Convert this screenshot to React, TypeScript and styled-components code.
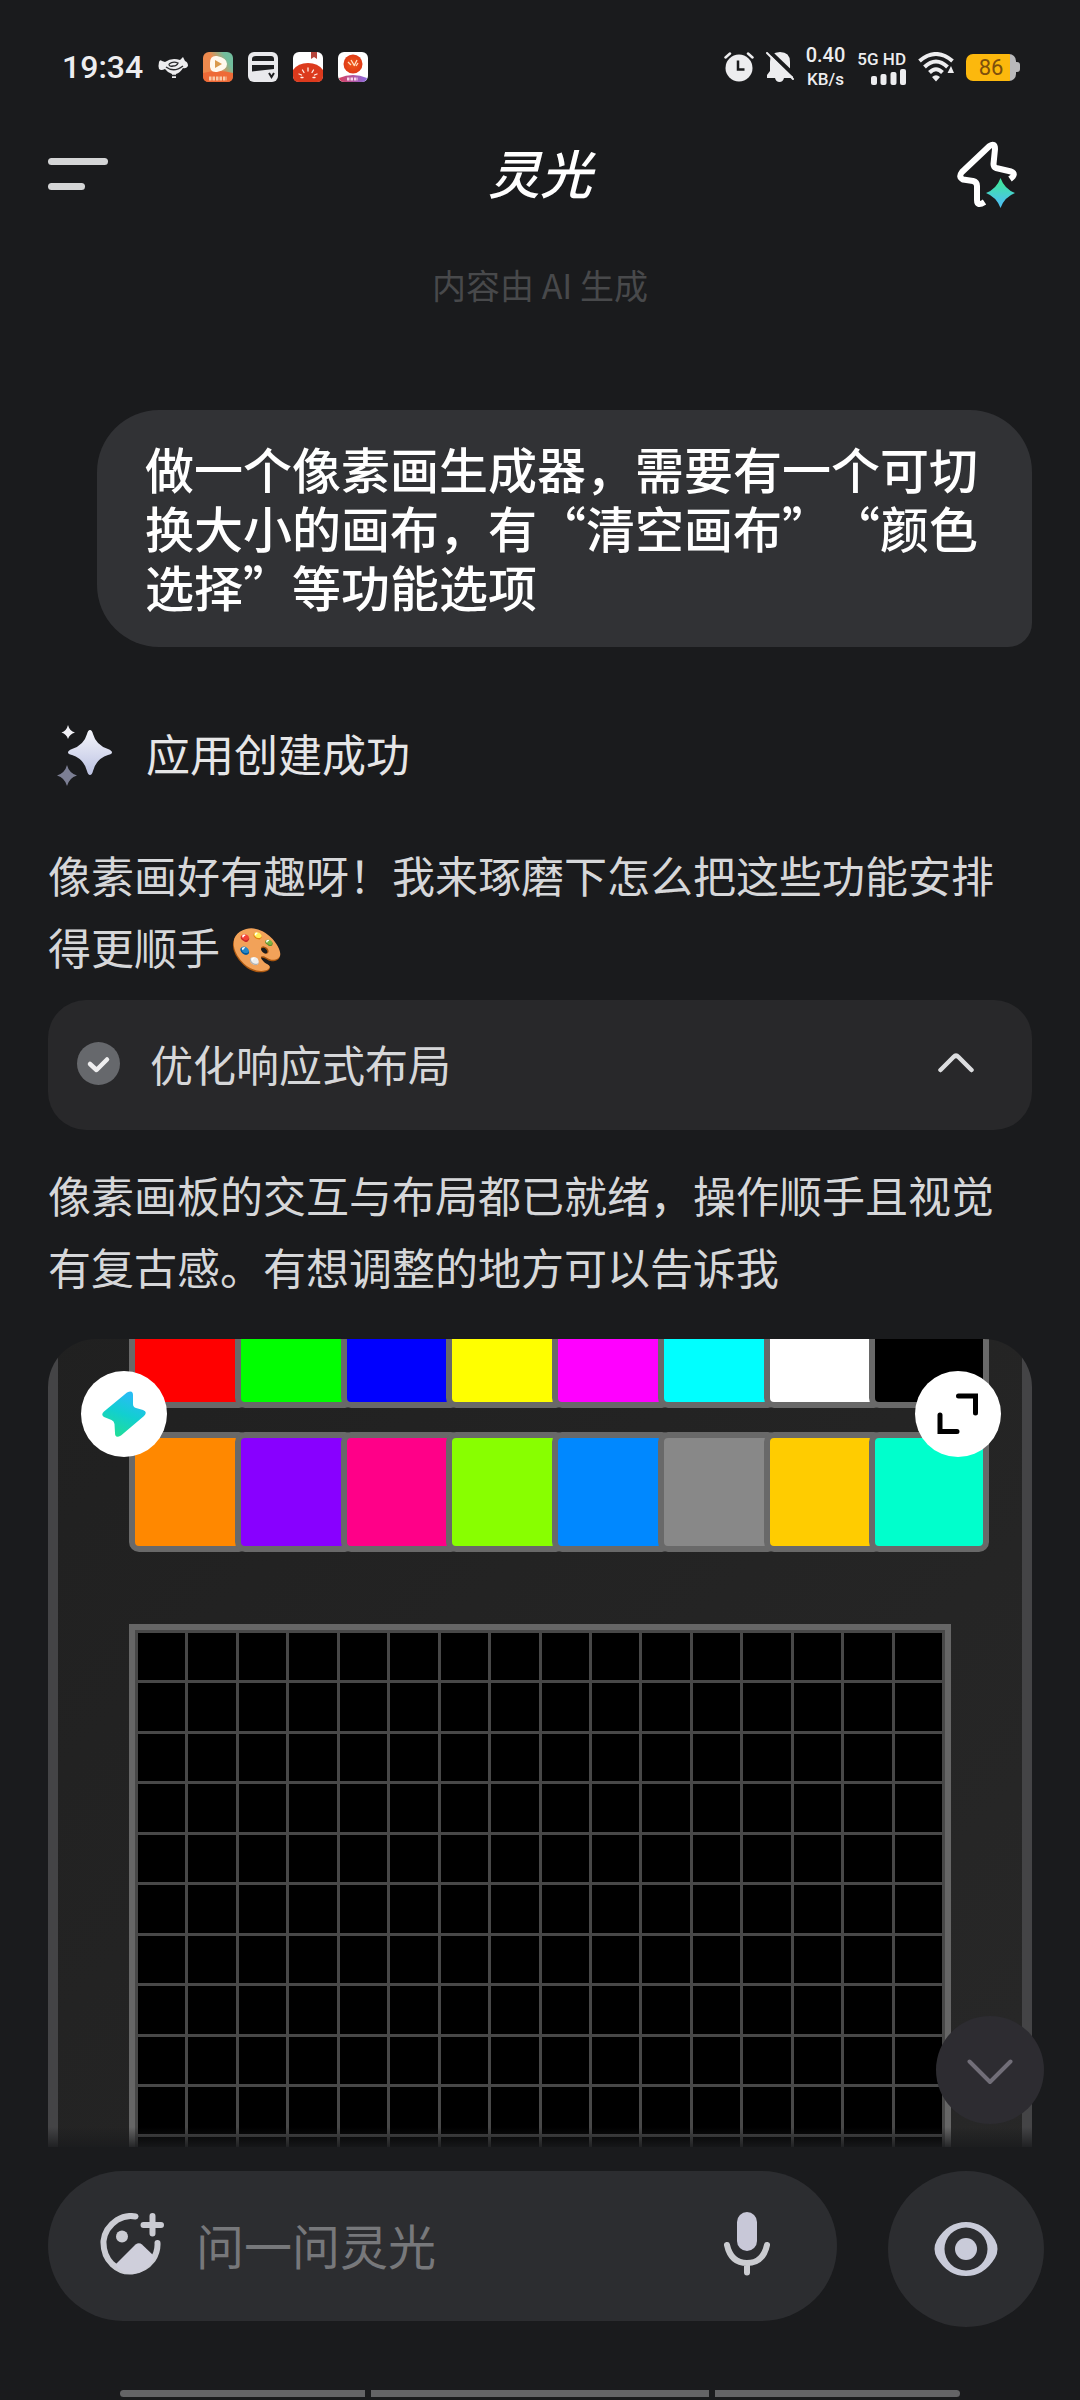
import React, { useState } from 'react';
import styled, { createGlobalStyle } from 'styled-components';

const GlobalStyle = createGlobalStyle`
  *, *::before, *::after { box-sizing: border-box; }
  body {
    margin: 0;
    background: #1a1b1d;
    color: #d6d7d9;
    font-family: "Noto Sans CJK SC", "Noto Sans", sans-serif;
    text-spacing-trim: space-all;
  }
  button { border: 0; padding: 0; background: none; color: inherit; font: inherit; cursor: pointer; }
  p, h1, h2 { margin: 0; font-weight: 400; }
  svg { display: block; flex: none; }
`;

const Screen = styled.div`
  display: flex;
  flex-direction: column;
  height: 100vh;
  overflow: hidden;
`;

/* ---------- status bar ---------- */

const StatusBar = styled.div`
  display: flex;
  justify-content: space-between;
  align-items: center;
  height: 88px;
  padding: 46px 60px 0 62px;
  color: #ededef;
  font-family: Roboto, "Noto Sans", sans-serif;
`;

const StatusGroup = styled.div<{ $gap: number }>`
  display: flex;
  align-items: center;
  gap: ${(p) => p.$gap}px;
`;

const Clock = styled.span`
  font-size: 32px;
  line-height: 40px;
  font-weight: 500;
`;

const StatusColumn = styled.div<{ $align: string; $gap: number }>`
  display: flex;
  flex-direction: column;
  align-items: ${(p) => p.$align};
  gap: ${(p) => p.$gap}px;
`;

const StatusText = styled.span<{ $size: number }>`
  font-size: ${(p) => p.$size}px;
  line-height: 18px;
  font-weight: 500;
  white-space: nowrap;
`;

const Battery = styled.div`
  display: flex;
  align-items: center;

  &::after {
    content: "";
    width: 4px;
    height: 10px;
    border-radius: 0 3px 3px 0;
    background: #b9b9bb;
  }
`;

const BatteryBody = styled.span`
  width: 50px;
  border-radius: 7px;
  background: linear-gradient(90deg, #fcb80d 88%, #b9b9bb 88%);
  color: #7d4f0c;
  font-size: 22px;
  line-height: 27px;
  text-align: center;
`;

/* ---------- header ---------- */

const Header = styled.header`
  display: grid;
  grid-template-columns: 1fr auto 1fr;
  align-items: center;
  height: 76px;
  margin-top: 48px;
  padding: 0 48px;
`;

const MenuButton = styled.button`
  display: grid;
  gap: 18px;
  justify-items: start;
  width: 60px;

  &::before, &::after {
    content: "";
    height: 7px;
    border-radius: 4px;
    background: #d4d5d6;
  }
  &::before { width: 60px; }
  &::after { width: 37px; }
`;

const Title = styled.h1`
  padding-bottom: 4px;
  color: #fff;
  font-size: 52px;
  line-height: 72px;
  font-style: italic;
  font-weight: 500;
`;

const FlashButton = styled.button`
  justify-self: end;
  padding-right: 15px;
`;

/* ---------- conversation ---------- */

const Conversation = styled.main`
  position: relative;
  flex: 1;
  min-height: 0;
  overflow: hidden;
  padding: 53px 48px 0;

  &::after {
    content: "";
    position: absolute;
    inset: auto 0 0;
    height: 20px;
    background: linear-gradient(rgba(26, 27, 29, 0), rgba(26, 27, 29, 0.85));
  }
`;

const Notice = styled.p`
  color: #48494b;
  font-size: 34px;
  line-height: 40px;
  text-align: center;
`;

const UserBubble = styled.p`
  margin: 105px 0 0 49px;
  padding: 28px 48px 32px;
  border-radius: 62px 62px 24px 62px;
  background: #313235;
  color: #fff;
  font-size: 49px;
  line-height: 59px;
  font-weight: 500;
`;

const StatusRow = styled.div`
  display: flex;
  align-items: center;
  gap: 33px;
  margin-top: 78px;
  padding-left: 9px;
`;

const StatusTitle = styled.h2`
  padding-bottom: 6px;
  color: #e6e6e7;
  font-size: 44px;
  line-height: 56px;
`;

const Paragraph = styled.p<{ $top: number }>`
  margin-top: ${(p) => p.$top}px;
  font-size: 43px;
  line-height: 72px;
`;

const StepButton = styled.button`
  display: flex;
  align-items: center;
  width: 100%;
  height: 130px;
  margin-top: 18px;
  padding: 0 58px 4px 29px;
  border-radius: 38px;
  background: #28282a;
  color: #d6d7d9;
  font-size: 43px;
  line-height: 72px;
  text-align: left;
`;

const StepLabel = styled.span`
  flex: 1;
  padding-left: 30px;
`;

/* ---------- generated app preview ---------- */

const Preview = styled.section`
  position: relative;
  margin-top: 37px;
  border-radius: 48px;
  overflow: hidden;
`;

const PixelApp = styled.div`
  margin-top: -51px;
  padding: 0 71px 71px;
  border: solid #444446;
  border-width: 0 10px;
  background: linear-gradient(135deg, #202020, #292929);
`;

const Palette = styled.div`
  display: grid;
  grid-template-columns: repeat(8, minmax(0, 1fr));
  gap: 24px;
`;

const Swatch = styled.button<{ $color: string }>`
  width: 120px;
  height: 120px;
  border: 6px solid #696969;
  border-radius: 10px;
  background: ${(p) => p.$color};
`;

const PixelGrid = styled.div`
  display: grid;
  grid-template-columns: repeat(16, minmax(0, 1fr));
  gap: 3px;
  margin-top: 72px;
  padding: 3px;
  border: 6px solid #666;
  background: #484848;
`;

const Pixel = styled.button<{ $color: string }>`
  aspect-ratio: 1;
  background: ${(p) => p.$color};
`;

const PreviewTools = styled.div`
  position: absolute;
  inset: 32px 31px auto 33px;
  display: flex;
  justify-content: space-between;
`;

const RoundButton = styled.button<{ $size: number; $color: string }>`
  display: grid;
  place-items: center;
  flex: none;
  width: ${(p) => p.$size}px;
  height: ${(p) => p.$size}px;
  border-radius: 50%;
  background: ${(p) => p.$color};
`;

const ScrollDown = styled(RoundButton)`
  position: absolute;
  right: 36px;
  bottom: 23px;
  z-index: 1;
  padding-top: 4px;
`;

/* ---------- composer ---------- */

const Footer = styled.footer`
  padding: 24px 36px 3px 48px;
`;

const Composer = styled.form`
  display: flex;
  justify-content: space-between;
  gap: 51px;
`;

const InputPill = styled.div`
  display: flex;
  align-items: center;
  flex: 1;
  min-width: 0;
  height: 150px;
  padding: 0 67px 5px 52px;
  border-radius: 75px;
  background: #2c2d30;
`;

const AskInput = styled.input`
  flex: 1;
  min-width: 0;
  height: 72px;
  margin-left: 32px;
  padding: 0;
  border: 0;
  outline: 0;
  background: none;
  color: #e6e6e7;
  font: 400 48px/72px "Noto Sans CJK SC", sans-serif;

  &::placeholder { color: #77787b; opacity: 1; }
`;

const NavBars = styled.div`
  display: grid;
  grid-template-columns: 245fr 338fr 245fr;
  gap: 6px;
  margin-top: 63px;
  padding: 0 84px 0 72px;
`;

const NavBar = styled.span`
  height: 7px;
  background: #646466;

  &:first-child { border-radius: 4px 0 0 4px; }
  &:last-child { border-radius: 0 4px 4px 0; }
`;

/* ---------- drawings ---------- */

const DogIcon = () => (
  <svg width="30" height="30" viewBox="0 0 30 30">
    <path d="M1 10 Q2 7 4 9 L7 10 Q14 5 22 8 L25 5 L27 9 Q30 10 30 14 Q28 17 25 16 Q22 21 18 22 L18 26 H14 V22 Q9 20 7 17 Q3 19 1 17 Q0 14 1 10 Z" fill="#ededef" />
    <path d="M11 12 Q15 9 20 11 Q19 14 15 14 Q11 15 11 12 M8 15 Q16 21 25 14 M13.500 23.500 h5" fill="none" stroke="#2b2c2e" strokeWidth="1.300" />
  </svg>
);

const VideoIcon = () => (
  <svg width="30" height="30" viewBox="0 0 30 30">
    <defs>
      <linearGradient id="video" x1="0" y1="0.600" x2="1" y2="0">
        <stop offset="0.400" stopColor="#ee8a4e" />
        <stop offset="0.750" stopColor="#71bd9d" />
      </linearGradient>
    </defs>
    <rect width="30" height="30" rx="6" fill="url(#video)" />
    <path d="M0 21 Q15 17 30 21 V24 Q30 30 24 30 H6 Q0 30 0 24 Z" fill="#ee6a37" />
    <path d="M7 11 Q7 3 14 4 Q24 6 24 12 Q24 18 14 20 Q6 21 7 11 Z" fill="#fff8ee" />
    <path d="M12 8 L19 12 L12 16 Z" fill="#d99a4e" />
    <path d="M6 26.500 H24" stroke="#f9c9a8" strokeWidth="4" strokeDasharray="2.500 1" />
  </svg>
);

const CardIcon = () => (
  <svg width="30" height="30" viewBox="0 0 30 30">
    <rect width="30" height="30" rx="6" fill="#e9e9ec" />
    <path d="M4 9 V7 Q4 4 8 4 H23 Q26 4 26 7 V9 Z M4 13 H26 V17 L4 19.500 Z" fill="#1d1e20" />
    <path d="M21 21 l2.500 4 l2.500 -4" fill="none" stroke="#1d1e20" strokeWidth="2" />
  </svg>
);

const TomatoIcon = () => (
  <svg width="30" height="30" viewBox="0 0 30 30">
    <rect width="30" height="30" rx="6" fill="#fff" />
    <path d="M18 0 h6 v7 l-3 -2 l-3 2 z" fill="#b5443a" />
    <path d="M0 18 Q5 11 15 11 Q25 11 30 18 V24 Q30 30 24 30 H6 Q0 30 0 24 Z" fill="#dc3a1d" />
    <path d="M15 16 v3 M9.500 18 l1.500 2.500 M20.500 18 l-1.500 2.500 M6 22 l2.500 1 M24 22 l-2.500 1 M8 25.500 h2 M22 25.500 h-2" stroke="#fff0e6" strokeWidth="1.300" strokeLinecap="round" />
  </svg>
);

const BallIcon = () => (
  <svg width="30" height="30" viewBox="0 0 30 30">
    <defs>
      <linearGradient id="ballBand">
        <stop stopColor="#d8405e" />
        <stop offset="1" stopColor="#8b6be0" />
      </linearGradient>
      <radialGradient id="ball">
        <stop stopColor="#f0591a" />
        <stop offset="1" stopColor="#df3a16" />
      </radialGradient>
    </defs>
    <rect width="30" height="30" rx="6" fill="#fff" />
    <circle cx="15" cy="12" r="9.500" fill="url(#ball)" />
    <path d="M10 10 l3 3 M13 8 l3 5 M19 8 l-3 6 M20 11 l-2 3" stroke="#ffe1c4" strokeWidth="1.300" />
    <path d="M1 26 Q15 20 29 26 Q28 30 24 30 H6 Q2 30 1 26 Z" fill="url(#ballBand)" />
    <path d="M9 27 h11" stroke="#f6d8ee" strokeWidth="3" strokeDasharray="2.500 1" />
  </svg>
);

const AlarmIcon = () => (
  <svg width="30" height="30" viewBox="0 0 30 30">
    <circle cx="15" cy="16" r="13.500" fill="#ededef" />
    <path d="M1.500 5.500 L6 1.500 M28.500 5.500 L24 1.500" stroke="#ededef" strokeWidth="2.500" strokeLinecap="round" />
    <path d="M14 8.500 V17.500 H20.500" fill="none" stroke="#1a1b1d" strokeWidth="2.500" />
  </svg>
);

const MutedBellIcon = () => (
  <svg width="28" height="30" viewBox="0 0 28 30">
    <path d="M14 0 Q24 0 24 10 V18 L27 24 V26 H18 Q17 30 13.500 30 Q10 30 9 26 H1 V23 L4 19 V10 Q4 0 14 0 Z" fill="#ededef" />
    <path d="M4 0 L28 23" stroke="#1a1b1d" strokeWidth="4" />
    <path d="M1 1 L27 27" stroke="#ededef" strokeWidth="2" strokeLinecap="round" />
  </svg>
);

const SignalIcon = () => (
  <svg width="35" height="16" viewBox="0 0 35 16">
    <g fill="#ededef">
      <rect y="7" width="6" height="9" rx="2" />
      <rect x="9.500" y="5" width="6" height="11" rx="2" />
      <rect x="19.500" y="3" width="6" height="13" rx="2" />
      <rect x="29" width="6" height="16" rx="2" />
    </g>
  </svg>
);

const WifiIcon = () => (
  <svg width="36" height="30" viewBox="0 0 36 30">
    <g fill="none" stroke="#ededef" strokeWidth="4">
      <path d="M1.500 9 Q18 -5 34.500 9" />
      <path d="M6.500 15 Q18 4 29.500 15" />
      <path d="M11.500 20.500 Q18 14 24.500 20.500" />
    </g>
    <path d="M14 25 Q18 21.500 22 25 L18 29.500 Z M33 14 L36 21 H29.500 Z" fill="#ededef" />
  </svg>
);

const FlashIcon = () => (
  <svg width="60" height="67" viewBox="0 0 60 67">
    <defs>
      <linearGradient id="spark" x2="0" y2="1">
        <stop offset="0.200" stopColor="#40e3a4" />
        <stop offset="0.800" stopColor="#4cc3ea" />
      </linearGradient>
    </defs>
    <path d="M53 38 Q60 33 54 30.500 L39 27 Q36.500 26 36.500 23 L38 8 Q38 1.500 32.500 5 L5 31 Q1 36 6 38.500 L16 40 Q20 41 20 45 V59 Q20 66 27.500 61" fill="none" stroke="#fff" strokeWidth="6" strokeLinejoin="round" />
    <path d="M43.500 37 Q47.500 48 58 52 Q47.500 56 43.500 67 Q39.500 56 29 52 Q39.500 48 43.500 37 Z" fill="url(#spark)" />
  </svg>
);

const SparklesIcon = () => (
  <svg width="56" height="62" viewBox="0 0 56 62">
    <defs>
      <linearGradient id="sparkles" x2="0" y2="1">
        <stop stopColor="#f4f5fb" />
        <stop offset="1" stopColor="#bcc2e2" />
      </linearGradient>
    </defs>
    <path d="M33 5 Q35 5 36 9 Q39 20 51 24 Q55 25.500 55 27.500 Q55 29 51 30 Q39 34 36 46 Q35 50 33 50 Q31 50 30 46 Q27 34 15 30 Q11 29 11 27.500 Q11 25.500 15 24 Q27 20 30 9 Q31 5 33 5 Z" fill="url(#sparkles)" />
    <path d="M11 0 Q12.500 6 18 7.500 Q12.500 9 11 14 Q9.500 9 4.500 7.500 Q9.500 6 11 0 Z" fill="#f1f1f6" />
    <path d="M10 40 Q12 48 20 50.500 Q12 53 10 61 Q8 53 0 50.500 Q8 48 10 40 Z" fill="#7c7f94" />
  </svg>
);

const CheckIcon = () => (
  <svg width="43" height="43" viewBox="0 0 43 43">
    <circle cx="21.500" cy="21.500" r="21.500" fill="#66686c" />
    <path d="M13 22 L19.500 28 L30 17.500" fill="none" stroke="#eeeeef" strokeWidth="4.500" strokeLinecap="round" strokeLinejoin="round" />
  </svg>
);

const ChevronUp = () => (
  <svg width="36" height="20" viewBox="0 0 36 20">
    <path d="M2.500 17 L15.500 4 Q18 1.500 20.500 4 L33.500 17" fill="none" stroke="#dcdddf" strokeWidth="4.500" strokeLinecap="round" />
  </svg>
);

const ChevronDown = () => (
  <svg width="46" height="26" viewBox="0 0 46 26">
    <path d="M2.500 2.500 L23 23 L43.500 2.500" fill="none" stroke="#716e78" strokeWidth="4" strokeLinecap="round" strokeLinejoin="round" />
  </svg>
);

const BoltIcon = () => (
  <svg width="44" height="46" viewBox="0 0 44 46">
    <defs>
      <linearGradient id="bolt" x1="0.700" y1="0" x2="0.300" y2="1">
        <stop offset="0.100" stopColor="#27bdf3" />
        <stop offset="0.500" stopColor="#12cfd0" />
        <stop offset="0.950" stopColor="#20dd9b" />
      </linearGradient>
    </defs>
    <path d="M25 1.500 Q31 -1.500 31 4 V13 Q31 16 34 17 L41 19 Q46 21 42 25 L19 44.500 Q13 48 13 42 L12.500 33 Q12 30 9.500 29 L2 26 Q-1.500 23.500 2 20.500 Z" fill="url(#bolt)" />
  </svg>
);

const ExpandIcon = () => (
  <svg width="42" height="42" viewBox="0 0 42 42">
    <path d="M21.500 3 H38.500 V20 M3 22 V38.500 H20" fill="none" stroke="#000" strokeWidth="5" strokeLinecap="round" strokeLinejoin="miter" />
  </svg>
);

const AddImageIcon = () => (
  <svg width="64" height="62" viewBox="0 0 64 62">
    <path d="M35.500 3.500 Q26 1.500 17 7 Q5 15 3.500 28 Q3 42 12 51 Q21 59.500 32 58.500 Q45 57 52.500 47 Q58 39 57.500 30" fill="none" stroke="#cbccd3" strokeWidth="6" strokeLinecap="round" />
    <path d="M15 52 L35.500 31.500 Q39 29 42 31.500 L53 42 L54 46 Q46 61 30 61 Q21 60 15 52 Z" fill="#cfcfdb" />
    <circle cx="22" cy="23.500" r="6" fill="#cbccd3" />
    <path d="M52.500 3 V20.500 M43.500 12 H61" stroke="#cbccd3" strokeWidth="6" strokeLinecap="round" />
  </svg>
);

const MicIcon = () => (
  <svg width="46" height="64" viewBox="0 0 46 64">
    <rect x="13" width="20" height="39" rx="10" fill="#c8c8d8" />
    <path d="M3 33 Q7 51 23 51 Q39 51 43 33 M23 51 V60.500" fill="none" stroke="#cbccd0" strokeWidth="6" strokeLinecap="round" />
  </svg>
);

const EyeIcon = () => (
  <svg width="64" height="54" viewBox="0 0 64 54">
    <path fillRule="evenodd" d="M32 0 Q50 0 61 18 Q66 27 61 36 Q50 54 32 54 Q14 54 3 36 Q-2 27 3 18 Q14 0 32 0 Z M32 5.500 A21.500 21.500 0 1 0 32 48.500 A21.500 21.500 0 1 0 32 5.500 Z" fill="#c9cbd9" />
    <circle cx="32" cy="27" r="11" fill="#c9cbd9" />
  </svg>
);

/* ---------- data ---------- */

const COLORS = [
  '#ff0000', '#00ff00', '#0000ff', '#ffff00', '#ff00ff', '#00ffff', '#ffffff', '#000000',
  '#ff8800', '#8800ff', '#ff0088', '#88ff00', '#0088ff', '#888888', '#ffcc00', '#00ffcc',
];

const SIZE = 16;

function PixelEditor() {
  const [color, setColor] = useState('#ffffff');
  const [pixels, setPixels] = useState<string[]>(() => Array(SIZE * SIZE).fill('#000000'));
  const paint = (index: number) => setPixels((old) => old.map((c, i) => (i === index ? color : c)));

  return (
    <PixelApp>
      <Palette>
        {COLORS.map((c) => (
          <Swatch key={c} type="button" $color={c} aria-label={c} onClick={() => setColor(c)} />
        ))}
      </Palette>
      <PixelGrid>
        {pixels.map((c, i) => (
          <Pixel key={i} type="button" $color={c} aria-label={`${(i % SIZE) + 1}, ${Math.floor(i / SIZE) + 1}`} onClick={() => paint(i)} />
        ))}
      </PixelGrid>
    </PixelApp>
  );
}

export default function App() {
  return (
    <>
      <GlobalStyle />
      <Screen>
        <StatusBar>
          <StatusGroup $gap={15}>
            <Clock>19:34</Clock>
            <DogIcon />
            <VideoIcon />
            <CardIcon />
            <TomatoIcon />
            <BallIcon />
          </StatusGroup>
          <StatusGroup $gap={12}>
            <AlarmIcon />
            <MutedBellIcon />
            <StatusColumn $align="center" $gap={6}>
              <StatusText $size={20}>0.40</StatusText>
              <StatusText $size={17}>KB/s</StatusText>
            </StatusColumn>
            <StatusColumn $align="flex-end" $gap={1}>
              <StatusText $size={17}>5G HD</StatusText>
              <SignalIcon />
            </StatusColumn>
            <WifiIcon />
            <Battery><BatteryBody>86</BatteryBody></Battery>
          </StatusGroup>
        </StatusBar>

        <Header>
          <MenuButton type="button" aria-label="菜单" />
          <Title>灵光</Title>
          <FlashButton type="button" aria-label="闪应用"><FlashIcon /></FlashButton>
        </Header>

        <Conversation>
          <Notice>内容由 AI 生成</Notice>
          <UserBubble>做一个像素画生成器，需要有一个可切换大小的画布，有“清空画布”“颜色选择”等功能选项</UserBubble>
          <StatusRow>
            <SparklesIcon />
            <StatusTitle>应用创建成功</StatusTitle>
          </StatusRow>
          <Paragraph $top={51}>像素画好有趣呀！我来琢磨下怎么把这些功能安排得更顺手 🎨</Paragraph>
          <StepButton type="button" aria-expanded="true">
            <CheckIcon />
            <StepLabel>优化响应式布局</StepLabel>
            <ChevronUp />
          </StepButton>
          <Paragraph $top={28}>像素画板的交互与布局都已就绪，操作顺手且视觉有复古感。有想调整的地方可以告诉我</Paragraph>
          <Preview>
            <PixelEditor />
            <PreviewTools>
              <RoundButton type="button" $size={86} $color="#fff" aria-label="闪应用"><BoltIcon /></RoundButton>
              <RoundButton type="button" $size={86} $color="#fff" aria-label="全屏"><ExpandIcon /></RoundButton>
            </PreviewTools>
          </Preview>
          <ScrollDown type="button" $size={108} $color="#2d2c31" aria-label="回到底部"><ChevronDown /></ScrollDown>
        </Conversation>

        <Footer>
          <Composer onSubmit={(e) => e.preventDefault()}>
            <InputPill>
              <button type="button" aria-label="添加图片"><AddImageIcon /></button>
              <AskInput type="text" aria-label="问一问灵光" placeholder="问一问灵光" />
              <button type="button" aria-label="语音输入"><MicIcon /></button>
            </InputPill>
            <RoundButton type="button" $size={156} $color="#2c2d30" aria-label="视觉识别"><EyeIcon /></RoundButton>
          </Composer>
          <NavBars>
            <NavBar />
            <NavBar />
            <NavBar />
          </NavBars>
        </Footer>
      </Screen>
    </>
  );
}
